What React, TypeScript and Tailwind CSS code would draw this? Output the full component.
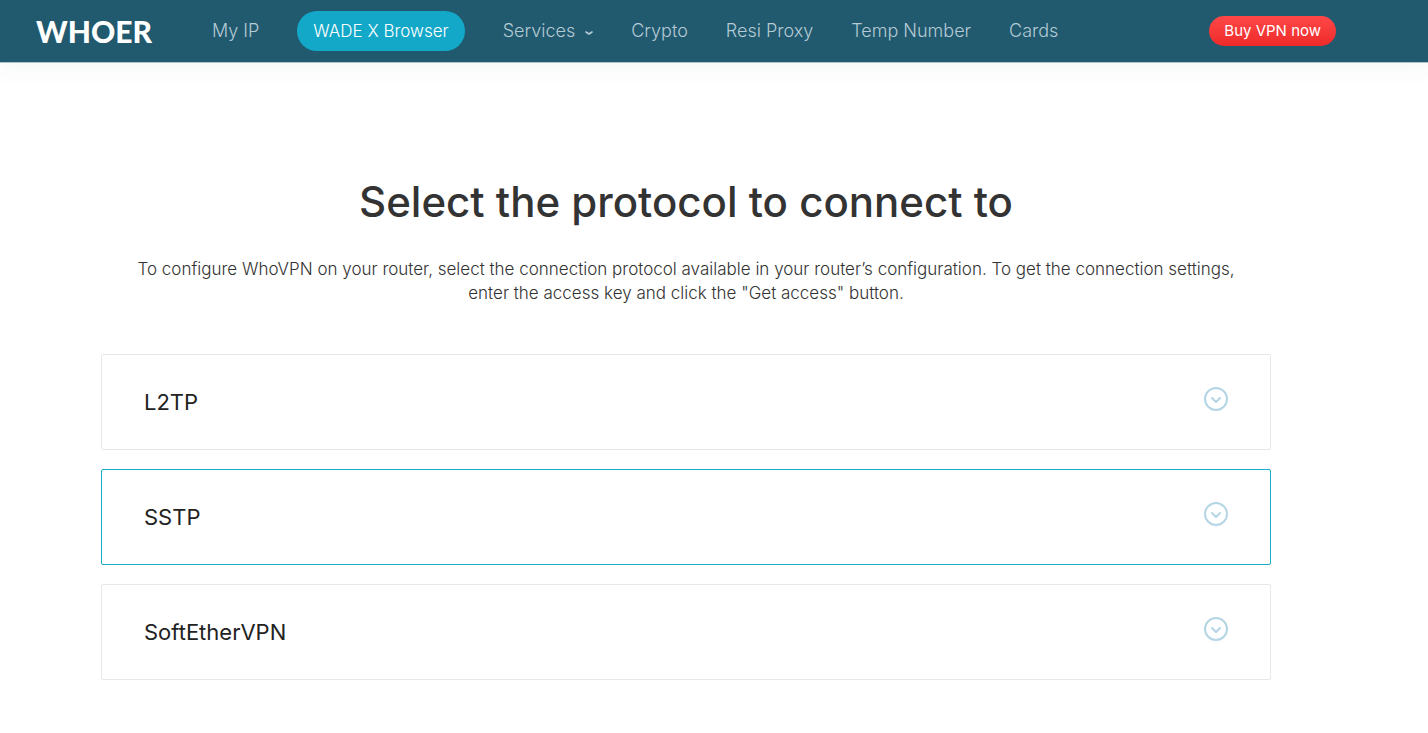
import { useState } from 'react';

const navLinks = ['Crypto', 'Resi Proxy', 'Temp Number', 'Cards'];

const protocols = [
  { id: 'l2tp', name: 'L2TP' },
  { id: 'sstp', name: 'SSTP' },
  { id: 'softether', name: 'SoftEtherVPN' },
];

const CircleChevron = () => (
  <svg
    className="h-6 w-6 shrink-0"
    viewBox="0 0 24 24"
    fill="none"
    stroke="#b5d5e4"
    strokeWidth="2"
    strokeLinecap="round"
    strokeLinejoin="round"
    aria-hidden="true"
  >
    <circle cx="12" cy="12" r="11" />
    <path d="M8 11l4 4 4-4" />
  </svg>
);

const Header = () => (
  <header className="flex h-[63px] items-center border-b border-[#adc3ce] bg-[#21596f] pr-[92px] pl-9 shadow-[0_4px_20px_4px_rgba(30,70,60,0.04)]">
    <a href="#" className="font-['Lato',sans-serif] text-[30px] leading-10 font-black text-white">
      WHOER
    </a>
    <nav className="ml-15 flex items-center gap-[38px] text-[18px] leading-6 font-light whitespace-nowrap text-[#b4cad4]">
      <a href="#">My IP</a>
      <a href="#" className="rounded-full bg-[#13a8c8] px-4 py-2 text-[17px] text-white">
        WADE X Browser
      </a>
      <button type="button" className="flex items-center gap-2.5">
        Services
        <svg
          className="mt-1 h-2 w-2"
          viewBox="0 0 8 8"
          fill="none"
          stroke="currentColor"
          strokeWidth="1.6"
          strokeLinecap="round"
          strokeLinejoin="round"
          aria-hidden="true"
        >
          <path d="M1 3l3 2 3-2" />
        </svg>
      </button>
      {navLinks.map((link) => (
        <a key={link} href="#">
          {link}
        </a>
      ))}
    </nav>
    <a
      href="#"
      className="ml-auto rounded-full bg-linear-to-b from-[#ff4747] to-[#ee2929] px-[15px] py-[3px] text-[15px] leading-6 whitespace-nowrap text-white"
    >
      Buy VPN now
    </a>
  </header>
);

export default function App() {
  const [active, setActive] = useState('sstp');

  return (
    <div className="min-h-screen bg-white font-['Inter',sans-serif] text-[#333333]">
      <Header />
      <main className="pr-14 pb-12">
        <div className="mx-auto max-w-[1170px] pt-[111px]">
          <h1 className="text-center text-[42px] leading-14 font-medium">
            Select the protocol to connect to
          </h1>
          <p className="mt-[27px] text-center text-[17px] leading-6 font-light">
            To configure WhoVPN on your router, select the connection protocol available in your
            router’s configuration. To get the connection settings,
            <br />
            enter the access key and click the "Get access" button.
          </p>

          {/* Protocol list */}
          <div className="mt-[49px] flex flex-col gap-[19px]">
            {protocols.map((protocol) => (
              <button
                key={protocol.id}
                type="button"
                onClick={() => setActive(protocol.id)}
                className={`flex w-full cursor-pointer items-start justify-between rounded-xs border px-[42px] py-8 text-left outline-none ${
                  active === protocol.id ? 'border-[#1caccb]' : 'border-[#e8e8e8]'
                }`}
              >
                <span className="text-[22px] leading-[30px] text-[#222222]">{protocol.name}</span>
                <CircleChevron />
              </button>
            ))}
          </div>
        </div>
      </main>
    </div>
  );
}
